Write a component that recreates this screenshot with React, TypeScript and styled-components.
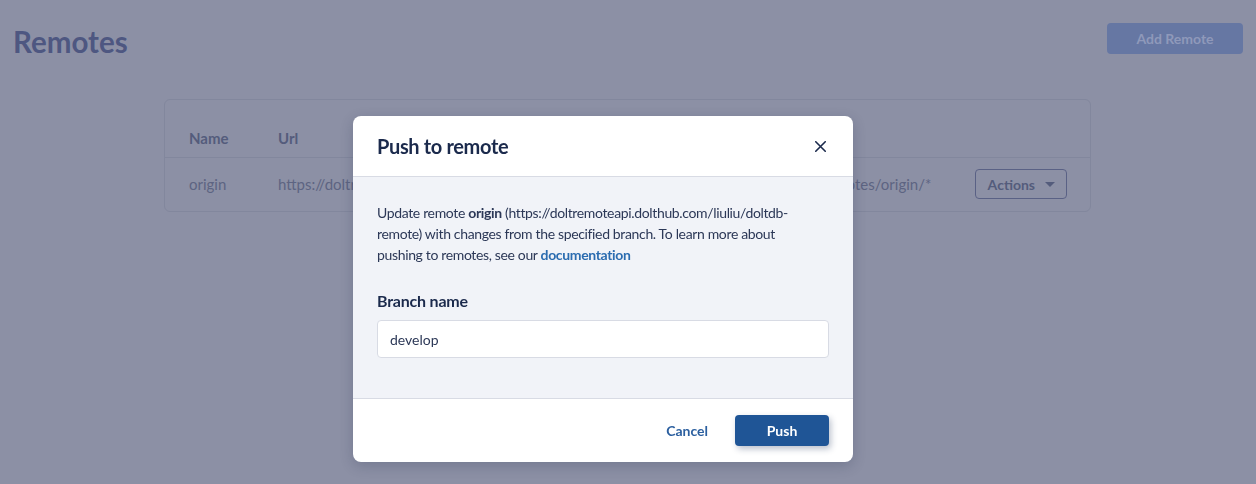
import React from "react";
import styled, { createGlobalStyle } from "styled-components";

const GlobalStyle = createGlobalStyle`
  html, body { margin: 0; padding: 0; }
  body {
    background: #8c90a5;
    font-family: Lato, "Liberation Sans", sans-serif;
    width: 1256px;
    height: 484px;
    overflow: hidden;
  }
`;

const Page = styled.div`
  padding: 26px 13px 0 13px;
`;

const TopBar = styled.div`
  display: flex;
  justify-content: space-between;
  align-items: flex-start;
`;

const Title = styled.h1`
  margin: -1px 0 0 0;
  font-size: 29.5px;
  line-height: 34px;
  font-weight: 700;
  color: #4e5781;
`;

const AddButton = styled.button`
  margin-top: -3px;
  width: 136px;
  height: 31px;
  border: none;
  border-radius: 4px;
  background: #6677a3;
  color: #8f99ba;
  font-family: inherit;
  font-weight: 700;
  font-size: 14px;
`;

const TableCard = styled.div`
  margin: 40px 0 0 151px;
  width: 925px;
  border: 1px solid #82879d;
  border-radius: 6px;
  overflow: hidden;
`;

const Table = styled.table`
  width: 100%;
  border-collapse: collapse;
  table-layout: fixed;
`;

const Col = styled.col<{ $w: string }>`
  width: ${(p) => p.$w};
`;

const Th = styled.th`
  text-align: left;
  vertical-align: bottom;
  height: 57px;
  box-sizing: border-box;
  padding: 0 0 10px 24px;
  font-size: 15px;
  font-weight: 700;
  color: #545c7c;
  border-bottom: 1px solid #82879d;
`;

const Td = styled.td<{ $right?: boolean }>`
  height: 53px;
  padding: 0 0 0 24px;
  font-size: 15px;
  color: #5d6482;
  white-space: nowrap;
  overflow: hidden;
  text-align: ${(p) => (p.$right ? "right" : "left")};
`;

const ActionsButton = styled.button`
  margin-right: 23px;
  display: inline-flex;
  align-items: center;
  gap: 10px;
  height: 30px;
  padding: 0 11px 0 12px;
  border: 1px solid #5a6185;
  border-radius: 4px;
  background: transparent;
  color: #545c7c;
  font-family: inherit;
  font-weight: 700;
  font-size: 14px;
`;

const Caret = styled.span`
  width: 0;
  height: 0;
  border-left: 5px solid transparent;
  border-right: 5px solid transparent;
  border-top: 5px solid #545c7c;
`;

const Modal = styled.div`
  position: fixed;
  left: 353px;
  top: 116px;
  width: 500px;
  border-radius: 8px;
  overflow: hidden;
  background: #fff;
  box-shadow: 0 4px 14px rgba(20, 30, 60, 0.2);
`;

const ModalHeader = styled.div`
  height: 60px;
  display: flex;
  align-items: center;
  justify-content: space-between;
  padding: 0 24px;
  border-bottom: 1px solid #d8dbe4;
`;

const ModalTitle = styled.h2`
  margin: 0;
  font-size: 20px;
  letter-spacing: -0.35px;
  font-weight: 700;
  color: #1b2a4c;
`;

const CloseButton = styled.button`
  border: none;
  background: none;
  padding: 0;
  margin-right: 3px;
  display: flex;
  cursor: pointer;
`;

const ModalBody = styled.div`
  background: #f1f3f8;
  padding: 25px 24px 40px 24px;
`;

const Description = styled.p`
  margin: 0;
  max-width: 440px;
  font-size: 14px;
  line-height: 21px;
  letter-spacing: -0.35px;
  color: #2c3857;
`;

const Link = styled.a`
  color: #2b6cb0;
  font-weight: 700;
  text-decoration: none;
`;

const Label = styled.label`
  display: block;
  margin-top: 26px;
  font-size: 16px;
  font-weight: 700;
  letter-spacing: -0.2px;
  color: #1b2a4c;
`;

const Input = styled.input`
  display: block;
  box-sizing: border-box;
  width: 100%;
  height: 38px;
  margin-top: 10px;
  padding: 0 12px;
  border: 1px solid #d8dbe4;
  border-radius: 4px;
  background: #fff;
  font-family: inherit;
  font-size: 14px;
  color: #2c3857;
  outline: none;
`;

const ModalFooter = styled.div`
  height: 63px;
  border-top: 1px solid #d8dbe4;
  display: flex;
  align-items: center;
  justify-content: flex-end;
  gap: 27px;
  padding: 0 24px;
`;

const CancelButton = styled.button`
  border: none;
  background: none;
  padding: 0;
  font-family: inherit;
  font-size: 14px;
  font-weight: 700;
  color: #2b5f9f;
`;

const PushButton = styled.button`
  width: 94px;
  height: 31px;
  border: none;
  border-radius: 4px;
  background: #1f5596;
  color: #fff;
  font-family: inherit;
  font-size: 14px;
  font-weight: 700;
  box-shadow: 2px 3px 6px rgba(30, 50, 90, 0.3);
`;

export default function App() {
  return (
    <>
      <GlobalStyle />
      <Page>
        <TopBar>
          <Title>Remotes</Title>
          <AddButton>Add Remote</AddButton>
        </TopBar>
        <TableCard>
          <Table>
            <colgroup>
              <Col $w="89px" />
              <Col $w="425px" />
              <Col $w="253px" />
              <Col $w="158px" />
            </colgroup>
            <thead>
              <tr>
                <Th>Name</Th>
                <Th>Url</Th>
                <Th>Fetch Specs</Th>
                <Th />
              </tr>
            </thead>
            <tbody>
              <tr>
                <Td>origin</Td>
                <Td>https://doltremoteapi.dolthub.com/liuliu/doltdb-remote</Td>
                <Td>refs/heads/*:refs/remotes/origin/*</Td>
                <Td $right>
                  <ActionsButton>
                    Actions <Caret />
                  </ActionsButton>
                </Td>
              </tr>
            </tbody>
          </Table>
        </TableCard>
      </Page>
      <Modal>
        <ModalHeader>
          <ModalTitle>Push to remote</ModalTitle>
          <CloseButton aria-label="Close">
            <svg width="11" height="11" viewBox="0 0 11 11">
              <path d="M0.75 0.75 L10.25 10.25 M10.25 0.75 L0.75 10.25" stroke="#1b2a4c" strokeWidth="1.6" strokeLinecap="round" />
            </svg>
          </CloseButton>
        </ModalHeader>
        <ModalBody>
          <Description>
            Update remote <b>origin</b> (https://doltremoteapi.dolthub.com/liuliu/doltdb-remote) with changes from the
            specified branch. To learn more about pushing to remotes, see our <Link href="#">documentation</Link>
          </Description>
          <Label>Branch name</Label>
          <Input defaultValue="develop" />
        </ModalBody>
        <ModalFooter>
          <CancelButton>Cancel</CancelButton>
          <PushButton>Push</PushButton>
        </ModalFooter>
      </Modal>
    </>
  );
}
